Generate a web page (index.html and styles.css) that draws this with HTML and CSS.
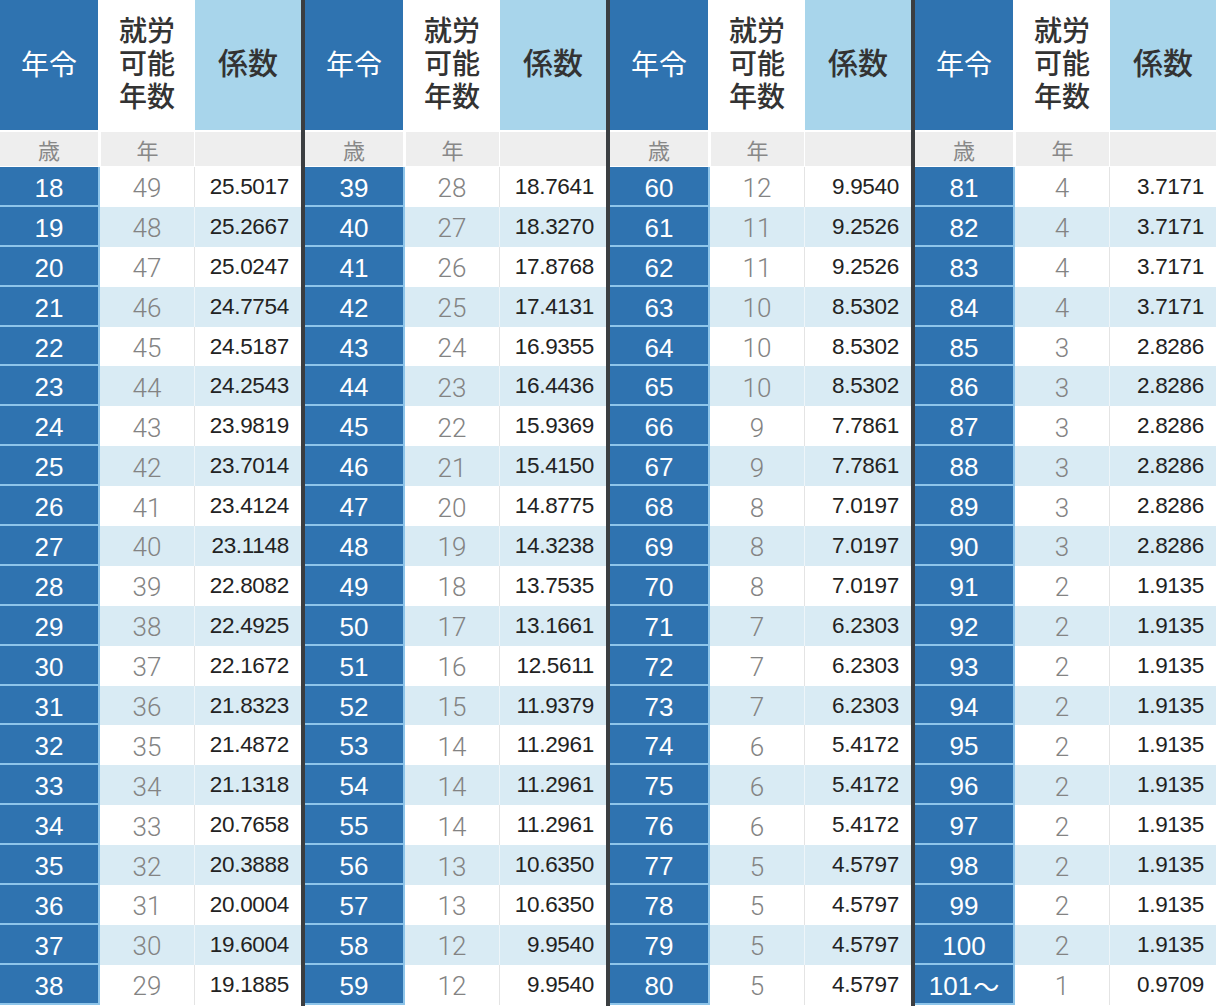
FILE: index.html
```html
<!DOCTYPE html>
<html lang="ja">
<head>
<meta charset="utf-8">
<title>就労可能年数とライプニッツ係数</title>
<link rel="stylesheet" href="styles.css">
</head>
<body>
<div class="sheet">
  <div class="group">
    <div class="row head"><div class="c age">年令</div><div class="c yrs">就労<br>可能<br>年数</div><div class="c coef">係数</div></div>
    <div class="row sub"><div class="c age">歳</div><div class="c yrs">年</div><div class="c coef"></div></div>
    <div class="row"><div class="c age">18</div><div class="c yrs">49</div><div class="c coef">25.5017</div></div>
    <div class="row"><div class="c age">19</div><div class="c yrs">48</div><div class="c coef">25.2667</div></div>
    <div class="row"><div class="c age">20</div><div class="c yrs">47</div><div class="c coef">25.0247</div></div>
    <div class="row"><div class="c age">21</div><div class="c yrs">46</div><div class="c coef">24.7754</div></div>
    <div class="row"><div class="c age">22</div><div class="c yrs">45</div><div class="c coef">24.5187</div></div>
    <div class="row"><div class="c age">23</div><div class="c yrs">44</div><div class="c coef">24.2543</div></div>
    <div class="row"><div class="c age">24</div><div class="c yrs">43</div><div class="c coef">23.9819</div></div>
    <div class="row"><div class="c age">25</div><div class="c yrs">42</div><div class="c coef">23.7014</div></div>
    <div class="row"><div class="c age">26</div><div class="c yrs">41</div><div class="c coef">23.4124</div></div>
    <div class="row"><div class="c age">27</div><div class="c yrs">40</div><div class="c coef">23.1148</div></div>
    <div class="row"><div class="c age">28</div><div class="c yrs">39</div><div class="c coef">22.8082</div></div>
    <div class="row"><div class="c age">29</div><div class="c yrs">38</div><div class="c coef">22.4925</div></div>
    <div class="row"><div class="c age">30</div><div class="c yrs">37</div><div class="c coef">22.1672</div></div>
    <div class="row"><div class="c age">31</div><div class="c yrs">36</div><div class="c coef">21.8323</div></div>
    <div class="row"><div class="c age">32</div><div class="c yrs">35</div><div class="c coef">21.4872</div></div>
    <div class="row"><div class="c age">33</div><div class="c yrs">34</div><div class="c coef">21.1318</div></div>
    <div class="row"><div class="c age">34</div><div class="c yrs">33</div><div class="c coef">20.7658</div></div>
    <div class="row"><div class="c age">35</div><div class="c yrs">32</div><div class="c coef">20.3888</div></div>
    <div class="row"><div class="c age">36</div><div class="c yrs">31</div><div class="c coef">20.0004</div></div>
    <div class="row"><div class="c age">37</div><div class="c yrs">30</div><div class="c coef">19.6004</div></div>
    <div class="row"><div class="c age">38</div><div class="c yrs">29</div><div class="c coef">19.1885</div></div>
  </div>
  <div class="group">
    <div class="row head"><div class="c age">年令</div><div class="c yrs">就労<br>可能<br>年数</div><div class="c coef">係数</div></div>
    <div class="row sub"><div class="c age">歳</div><div class="c yrs">年</div><div class="c coef"></div></div>
    <div class="row"><div class="c age">39</div><div class="c yrs">28</div><div class="c coef">18.7641</div></div>
    <div class="row"><div class="c age">40</div><div class="c yrs">27</div><div class="c coef">18.3270</div></div>
    <div class="row"><div class="c age">41</div><div class="c yrs">26</div><div class="c coef">17.8768</div></div>
    <div class="row"><div class="c age">42</div><div class="c yrs">25</div><div class="c coef">17.4131</div></div>
    <div class="row"><div class="c age">43</div><div class="c yrs">24</div><div class="c coef">16.9355</div></div>
    <div class="row"><div class="c age">44</div><div class="c yrs">23</div><div class="c coef">16.4436</div></div>
    <div class="row"><div class="c age">45</div><div class="c yrs">22</div><div class="c coef">15.9369</div></div>
    <div class="row"><div class="c age">46</div><div class="c yrs">21</div><div class="c coef">15.4150</div></div>
    <div class="row"><div class="c age">47</div><div class="c yrs">20</div><div class="c coef">14.8775</div></div>
    <div class="row"><div class="c age">48</div><div class="c yrs">19</div><div class="c coef">14.3238</div></div>
    <div class="row"><div class="c age">49</div><div class="c yrs">18</div><div class="c coef">13.7535</div></div>
    <div class="row"><div class="c age">50</div><div class="c yrs">17</div><div class="c coef">13.1661</div></div>
    <div class="row"><div class="c age">51</div><div class="c yrs">16</div><div class="c coef">12.5611</div></div>
    <div class="row"><div class="c age">52</div><div class="c yrs">15</div><div class="c coef">11.9379</div></div>
    <div class="row"><div class="c age">53</div><div class="c yrs">14</div><div class="c coef">11.2961</div></div>
    <div class="row"><div class="c age">54</div><div class="c yrs">14</div><div class="c coef">11.2961</div></div>
    <div class="row"><div class="c age">55</div><div class="c yrs">14</div><div class="c coef">11.2961</div></div>
    <div class="row"><div class="c age">56</div><div class="c yrs">13</div><div class="c coef">10.6350</div></div>
    <div class="row"><div class="c age">57</div><div class="c yrs">13</div><div class="c coef">10.6350</div></div>
    <div class="row"><div class="c age">58</div><div class="c yrs">12</div><div class="c coef">9.9540</div></div>
    <div class="row"><div class="c age">59</div><div class="c yrs">12</div><div class="c coef">9.9540</div></div>
  </div>
  <div class="group">
    <div class="row head"><div class="c age">年令</div><div class="c yrs">就労<br>可能<br>年数</div><div class="c coef">係数</div></div>
    <div class="row sub"><div class="c age">歳</div><div class="c yrs">年</div><div class="c coef"></div></div>
    <div class="row"><div class="c age">60</div><div class="c yrs">12</div><div class="c coef">9.9540</div></div>
    <div class="row"><div class="c age">61</div><div class="c yrs">11</div><div class="c coef">9.2526</div></div>
    <div class="row"><div class="c age">62</div><div class="c yrs">11</div><div class="c coef">9.2526</div></div>
    <div class="row"><div class="c age">63</div><div class="c yrs">10</div><div class="c coef">8.5302</div></div>
    <div class="row"><div class="c age">64</div><div class="c yrs">10</div><div class="c coef">8.5302</div></div>
    <div class="row"><div class="c age">65</div><div class="c yrs">10</div><div class="c coef">8.5302</div></div>
    <div class="row"><div class="c age">66</div><div class="c yrs">9</div><div class="c coef">7.7861</div></div>
    <div class="row"><div class="c age">67</div><div class="c yrs">9</div><div class="c coef">7.7861</div></div>
    <div class="row"><div class="c age">68</div><div class="c yrs">8</div><div class="c coef">7.0197</div></div>
    <div class="row"><div class="c age">69</div><div class="c yrs">8</div><div class="c coef">7.0197</div></div>
    <div class="row"><div class="c age">70</div><div class="c yrs">8</div><div class="c coef">7.0197</div></div>
    <div class="row"><div class="c age">71</div><div class="c yrs">7</div><div class="c coef">6.2303</div></div>
    <div class="row"><div class="c age">72</div><div class="c yrs">7</div><div class="c coef">6.2303</div></div>
    <div class="row"><div class="c age">73</div><div class="c yrs">7</div><div class="c coef">6.2303</div></div>
    <div class="row"><div class="c age">74</div><div class="c yrs">6</div><div class="c coef">5.4172</div></div>
    <div class="row"><div class="c age">75</div><div class="c yrs">6</div><div class="c coef">5.4172</div></div>
    <div class="row"><div class="c age">76</div><div class="c yrs">6</div><div class="c coef">5.4172</div></div>
    <div class="row"><div class="c age">77</div><div class="c yrs">5</div><div class="c coef">4.5797</div></div>
    <div class="row"><div class="c age">78</div><div class="c yrs">5</div><div class="c coef">4.5797</div></div>
    <div class="row"><div class="c age">79</div><div class="c yrs">5</div><div class="c coef">4.5797</div></div>
    <div class="row"><div class="c age">80</div><div class="c yrs">5</div><div class="c coef">4.5797</div></div>
  </div>
  <div class="group">
    <div class="row head"><div class="c age">年令</div><div class="c yrs">就労<br>可能<br>年数</div><div class="c coef">係数</div></div>
    <div class="row sub"><div class="c age">歳</div><div class="c yrs">年</div><div class="c coef"></div></div>
    <div class="row"><div class="c age">81</div><div class="c yrs">4</div><div class="c coef">3.7171</div></div>
    <div class="row"><div class="c age">82</div><div class="c yrs">4</div><div class="c coef">3.7171</div></div>
    <div class="row"><div class="c age">83</div><div class="c yrs">4</div><div class="c coef">3.7171</div></div>
    <div class="row"><div class="c age">84</div><div class="c yrs">4</div><div class="c coef">3.7171</div></div>
    <div class="row"><div class="c age">85</div><div class="c yrs">3</div><div class="c coef">2.8286</div></div>
    <div class="row"><div class="c age">86</div><div class="c yrs">3</div><div class="c coef">2.8286</div></div>
    <div class="row"><div class="c age">87</div><div class="c yrs">3</div><div class="c coef">2.8286</div></div>
    <div class="row"><div class="c age">88</div><div class="c yrs">3</div><div class="c coef">2.8286</div></div>
    <div class="row"><div class="c age">89</div><div class="c yrs">3</div><div class="c coef">2.8286</div></div>
    <div class="row"><div class="c age">90</div><div class="c yrs">3</div><div class="c coef">2.8286</div></div>
    <div class="row"><div class="c age">91</div><div class="c yrs">2</div><div class="c coef">1.9135</div></div>
    <div class="row"><div class="c age">92</div><div class="c yrs">2</div><div class="c coef">1.9135</div></div>
    <div class="row"><div class="c age">93</div><div class="c yrs">2</div><div class="c coef">1.9135</div></div>
    <div class="row"><div class="c age">94</div><div class="c yrs">2</div><div class="c coef">1.9135</div></div>
    <div class="row"><div class="c age">95</div><div class="c yrs">2</div><div class="c coef">1.9135</div></div>
    <div class="row"><div class="c age">96</div><div class="c yrs">2</div><div class="c coef">1.9135</div></div>
    <div class="row"><div class="c age">97</div><div class="c yrs">2</div><div class="c coef">1.9135</div></div>
    <div class="row"><div class="c age">98</div><div class="c yrs">2</div><div class="c coef">1.9135</div></div>
    <div class="row"><div class="c age">99</div><div class="c yrs">2</div><div class="c coef">1.9135</div></div>
    <div class="row"><div class="c age">100</div><div class="c yrs">2</div><div class="c coef">1.9135</div></div>
    <div class="row"><div class="c age">101<span class="tilde">〜</span></div><div class="c yrs">1</div><div class="c coef">0.9709</div></div>
  </div>
</div>
</body>
</html>
```

FILE: styles.css
```css
html, body {
  margin: 0;
  padding: 0;
  overflow: hidden;
  background: #ffffff;
}

.sheet {
  display: flex;
  gap: 4px;
  width: 1216px;
  height: 1006px;
  background: #3b3e41;
  font-family: "Liberation Sans", "Noto Sans CJK JP", sans-serif;
}

.group {
  width: 301px;
  background: #ffffff;
  display: flex;
  flex-direction: column;
}

.row {
  display: grid;
  grid-template-columns: 98px 96px 107px;
  height: 39.9px;
  flex: none;
}

.c {
  box-sizing: border-box;
  display: flex;
  align-items: center;
  justify-content: center;
  line-height: 30px;
  white-space: nowrap;
}

.row .age {
  background: #2f73b0;
  color: #ffffff;
  font-size: 26px;
  padding-top: 4px;
  border-bottom: 2px solid #8ec5ea;
}

.tilde {
  font-family: "Noto Sans CJK JP", sans-serif;
  font-size: 26px;
  line-height: 30px;
  display: inline-block;
  margin-left: 1px;
}

.row .yrs {
  border-left: 2px solid #8ec5ea;
  color: #838383;
  font-family: Roboto, "Liberation Sans", sans-serif;
  font-weight: 300;
  font-size: 26px;
  padding-top: 3px;
}

.row .coef {
  border-left: 1px solid #e4e4e4;
  justify-content: flex-end;
  padding-right: 12px;
  color: #222222;
  font-size: 22.5px;
  letter-spacing: -0.3px;
}

.row:nth-child(even) .yrs,
.row:nth-child(even) .coef {
  background: #d9ebf4;
}

.row:nth-child(even) .coef {
  border-left-color: #eef5f9;
}

.row.head {
  height: 130px;
  margin-bottom: 2px;
  font-family: "Noto Sans CJK JP", sans-serif;
}

.row.head .c {
  padding: 0;
  border-bottom: none;
}

.row.head .age {
  color: #ffffff;
  font-size: 28px;
  padding-bottom: 4px;
}

.row.head .yrs {
  border-left-color: #ffffff;
  background: #ffffff;
  color: #333333;
  font-family: "Noto Sans CJK JP", sans-serif;
  font-size: 28px;
  line-height: 33px;
  text-align: center;
  font-weight: 500;
  padding-bottom: 6px;
}

.row.head .coef {
  border-left-color: #ffffff;
  background: #a8d5eb;
  color: #333333;
  font-size: 30px;
  font-weight: 500;
  justify-content: center;
  padding-bottom: 8px;
  letter-spacing: 0;
}

.row.sub {
  height: 34px;
  margin-bottom: 1px;
  font-family: "Noto Sans CJK JP", sans-serif;
}

.row.sub .c {
  background: #eeeeee;
  color: #888888;
  font-family: "Noto Sans CJK JP", sans-serif;
  font-weight: 400;
  font-size: 22px;
  padding: 0;
  border-bottom: none;
}

.row.sub .yrs {
  border-left: 3px solid #ffffff;
}

.row.sub .coef {
  border-left: 1px solid #ffffff;
}
```
